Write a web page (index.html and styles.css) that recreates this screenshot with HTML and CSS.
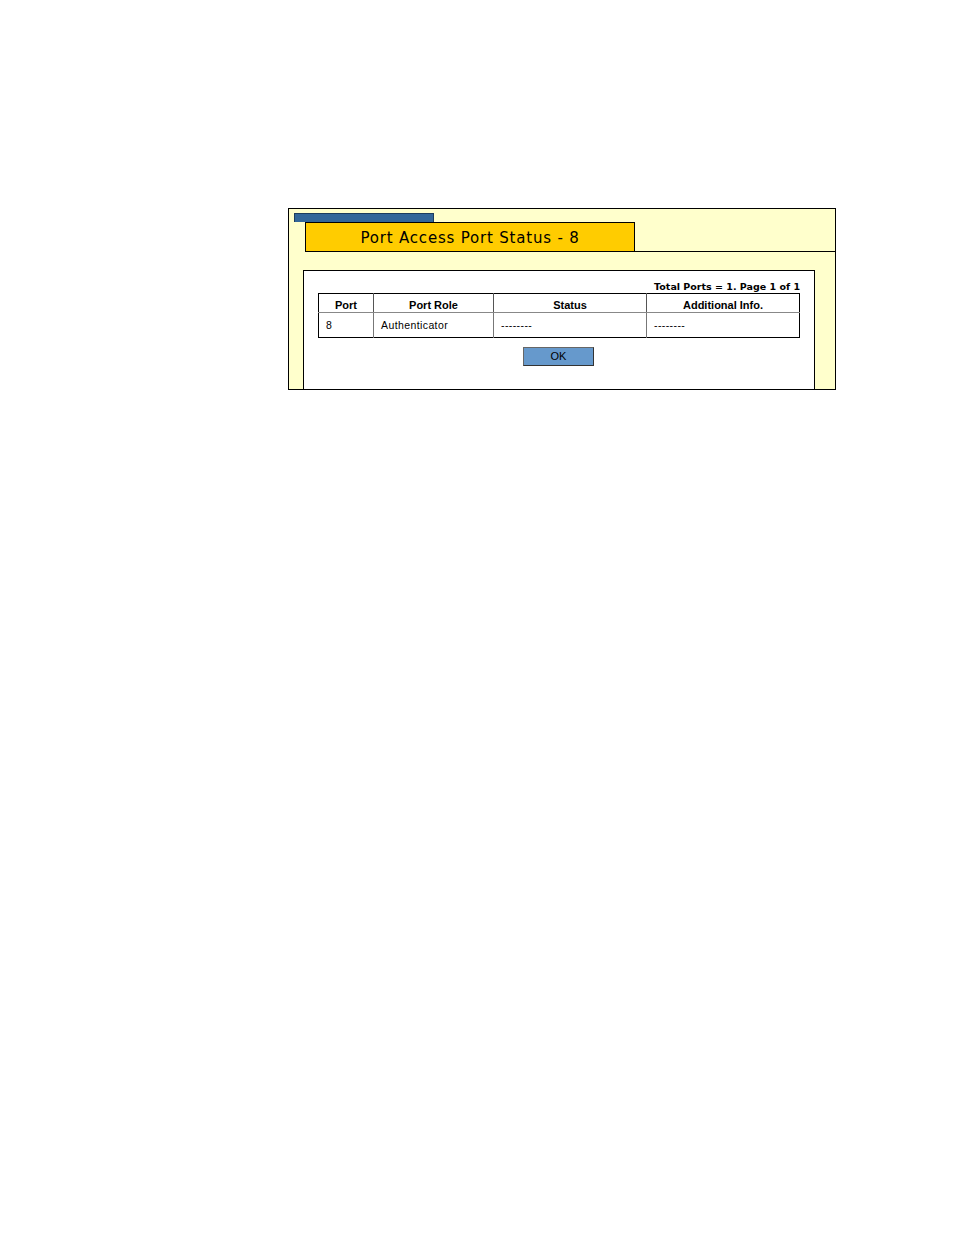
FILE: index.html
```html
<!DOCTYPE html>
<html>
<head>
<meta charset="utf-8">
<link rel="stylesheet" href="styles.css">
</head>
<body>
<div class="panel">
  <div class="tabbar"></div>
  <div class="titlerow">
    <div class="titlebox">Port Access Port Status - 8</div>
  </div>
  <div class="inner">
    <div class="total">Total Ports = 1. Page 1 of 1</div>
    <table class="grid">
      <colgroup>
        <col class="c1"><col class="c2"><col class="c3"><col class="c4">
      </colgroup>
      <thead>
        <tr><th>Port</th><th>Port Role</th><th>Status</th><th>Additional Info.</th></tr>
      </thead>
      <tbody>
        <tr><td>8</td><td>Authenticator</td><td>--------</td><td>--------</td></tr>
      </tbody>
    </table>
    <div class="actions"><button class="ok">OK</button></div>
  </div>
</div>
</body>
</html>
```
FILE: styles.css
```css
html, body {
  margin: 0;
  padding: 0;
  background: #ffffff;
}
body {
  padding-top: 208px;
  padding-left: 288px;
}
.panel {
  width: 546px;
  height: 180px;
  border: 1px solid #000;
  background: #ffffcc;
  display: flex;
  flex-direction: column;
}
.tabbar {
  margin-top: 4px;
  margin-left: 5px;
  width: 138px;
  height: 8px;
  background: #336699;
  border: 1px solid #1d3d5e;
  border-bottom: none;
}
.titlerow {
  margin-left: 16px;
  border-bottom: 1px solid #000;
  display: flex;
}
.titlebox {
  width: 328px;
  height: 28px;
  background: #ffcc00;
  border: 1px solid #000;
  border-bottom: none;
  font-family: "DejaVu Sans", Verdana, sans-serif;
  font-size: 15px;
  letter-spacing: 0.8px;
  line-height: 30px;
  text-align: center;
  color: #000;
}
.inner {
  margin: 18px 20px 0 14px;
  flex: 1;
  background: #fff;
  border: 1px solid #000;
  border-bottom: none;
  padding: 0 14px;
}
.total {
  margin-top: 10px;
  text-align: right;
  font-family: "DejaVu Sans", Verdana, sans-serif;
  font-weight: bold;
  font-size: 9.5px;
  line-height: 12px;
  height: 12px;
  color: #000;
}
.grid {
  width: 482px;
  border-collapse: collapse;
  border: 1px solid #000;
  font-family: "Liberation Sans", Arial, sans-serif;
  color: #000;
  table-layout: fixed;
}
.c1 { width: 55px; }
.c2 { width: 120px; }
.c3 { width: 153px; }
.c4 { width: 153px; }
.grid th {
  height: 18px;
  padding: 0;
  font-size: 11px;
  font-weight: bold;
  text-align: center;
  vertical-align: bottom;
  line-height: 14px;
  border-left: 1px solid #555;
  border-bottom: 1px solid #888;
}
.grid td {
  height: 24px;
  padding: 0 0 0 7px;
  font-size: 10.5px;
  letter-spacing: 0.4px;
  text-align: left;
  line-height: 24px;
  border-left: 1px solid #777;
}
.grid th:first-child, .grid td:first-child {
  border-left: 1px solid #000;
}
.actions {
  margin-top: 9px;
  display: flex;
  justify-content: center;
}
.ok {
  width: 71px;
  height: 19px;
  margin: 0 1px 0 0;
  padding: 0;
  background: #6699cc;
  border: 1px solid #333;
  border-top-color: #666;
  border-left-color: #666;
  font-family: "Liberation Sans", Arial, sans-serif;
  font-size: 11px;
  color: #000;
  line-height: 17px;
}
```
